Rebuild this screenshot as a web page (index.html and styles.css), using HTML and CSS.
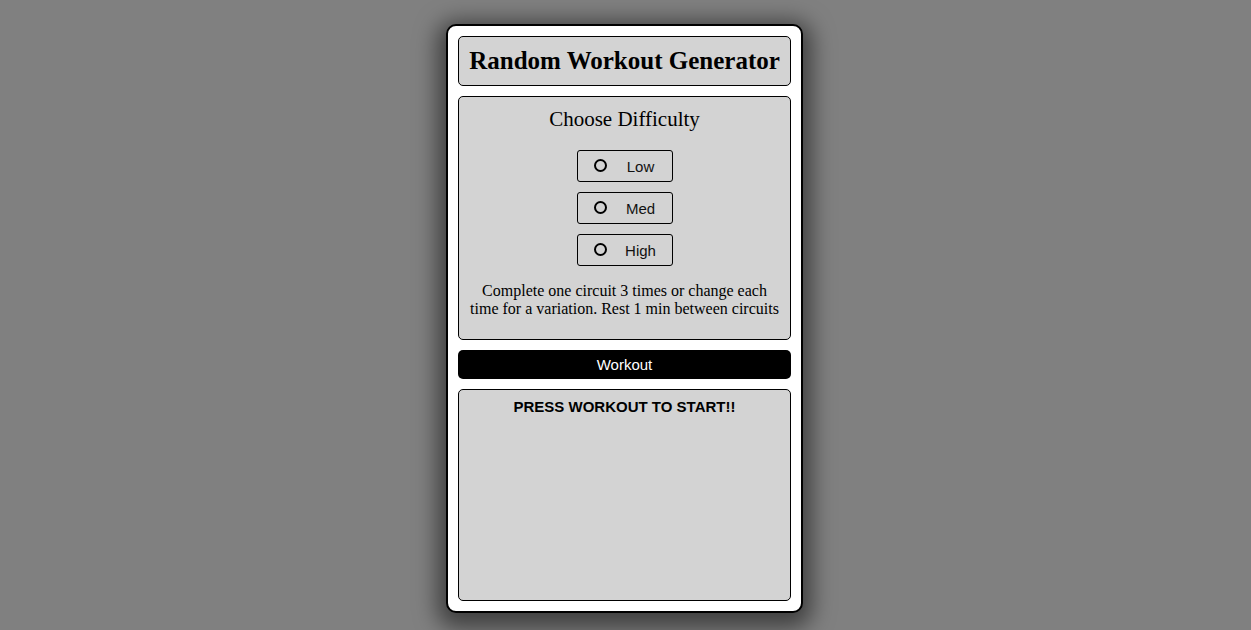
FILE: index.html
```html
<!DOCTYPE html>
<html>
<head>
<meta charset="utf-8">
<link rel="stylesheet" href="styles.css">
</head>
<body>
<div class="phone">
  <div class="panel header">
    <h1 class="title">Random Workout Generator</h1>
  </div>
  <div class="panel difficulty">
    <h2 class="subtitle">Choose Difficulty</h2>
    <div class="options">
      <label class="option"><span class="radio"></span><span class="opt-text">Low</span></label>
      <label class="option"><span class="radio"></span><span class="opt-text">Med</span></label>
      <label class="option"><span class="radio"></span><span class="opt-text">High</span></label>
    </div>
    <p class="note">Complete one circuit 3 times or change each time for a variation. Rest 1 min between circuits</p>
  </div>
  <button class="workout-btn">Workout</button>
  <div class="panel output">
    <div class="output-title">PRESS WORKOUT TO START!!</div>
  </div>
</div>
</body>
</html>
```

FILE: styles.css
```css
html, body {
  margin: 0;
  padding: 0;
  background: #808080;
  height: 100%;
  overflow: hidden;
}
body {
  padding-top: 24px;
  box-sizing: border-box;
  font-family: "Liberation Serif", "Times New Roman", serif;
}
.phone {
  width: 333px;
  margin: 0 auto;
  position: relative;
  left: -1px;
  background: #fff;
  border: 2px solid #000;
  border-radius: 10px;
  padding: 10px;
  display: flex;
  flex-direction: column;
  gap: 10px;
  box-shadow: 0 6px 22px 9px rgba(0,0,0,0.5);
}
.panel {
  background: #d3d3d3;
  border: 1px solid #000;
  border-radius: 5px;
}
.header {
  height: 48px;
  display: flex;
  align-items: center;
  justify-content: center;
}
.title {
  margin: 0;
  font-size: 25px;
  font-weight: bold;
  line-height: 30px;
}
.difficulty {
  height: 242px;
  box-sizing: content-box;
  display: flex;
  flex-direction: column;
  align-items: center;
}
.subtitle {
  margin: 10px 0 0;
  font-size: 21px;
  font-weight: normal;
  line-height: 24px;
}
.options {
  margin-top: 19px;
  display: flex;
  flex-direction: column;
  gap: 10px;
}
.option {
  height: 30px;
  border: 1px solid #000;
  border-radius: 3px;
  display: flex;
  align-items: center;
  padding-left: 16px;
  box-sizing: content-box;
  width: 78px;
  font-family: "Liberation Sans", Arial, sans-serif;
  font-size: 15px;
  color: #111;
}
.radio {
  width: 9px;
  height: 9px;
  border: 2px solid #000;
  border-radius: 50%;
  flex: none;
  margin-top: -1px;
}
.opt-text {
  flex: 1;
  text-align: center;
  padding-left: 3px;
}
.note {
  margin: 16px 0 0;
  font-size: 16px;
  line-height: 18px;
  text-align: center;
  padding: 0 8px;
}
.workout-btn {
  height: 29px;
  background: #000;
  color: #fff;
  border: none;
  border-radius: 5px;
  font-family: "Liberation Sans", Arial, sans-serif;
  font-size: 15px;
  padding: 0;
}
.output {
  height: 210px;
  text-align: center;
}
.output-title {
  margin-top: 8px;
  font-family: "Liberation Sans", Arial, sans-serif;
  font-weight: bold;
  font-size: 15px;
  line-height: 18px;
}
```
